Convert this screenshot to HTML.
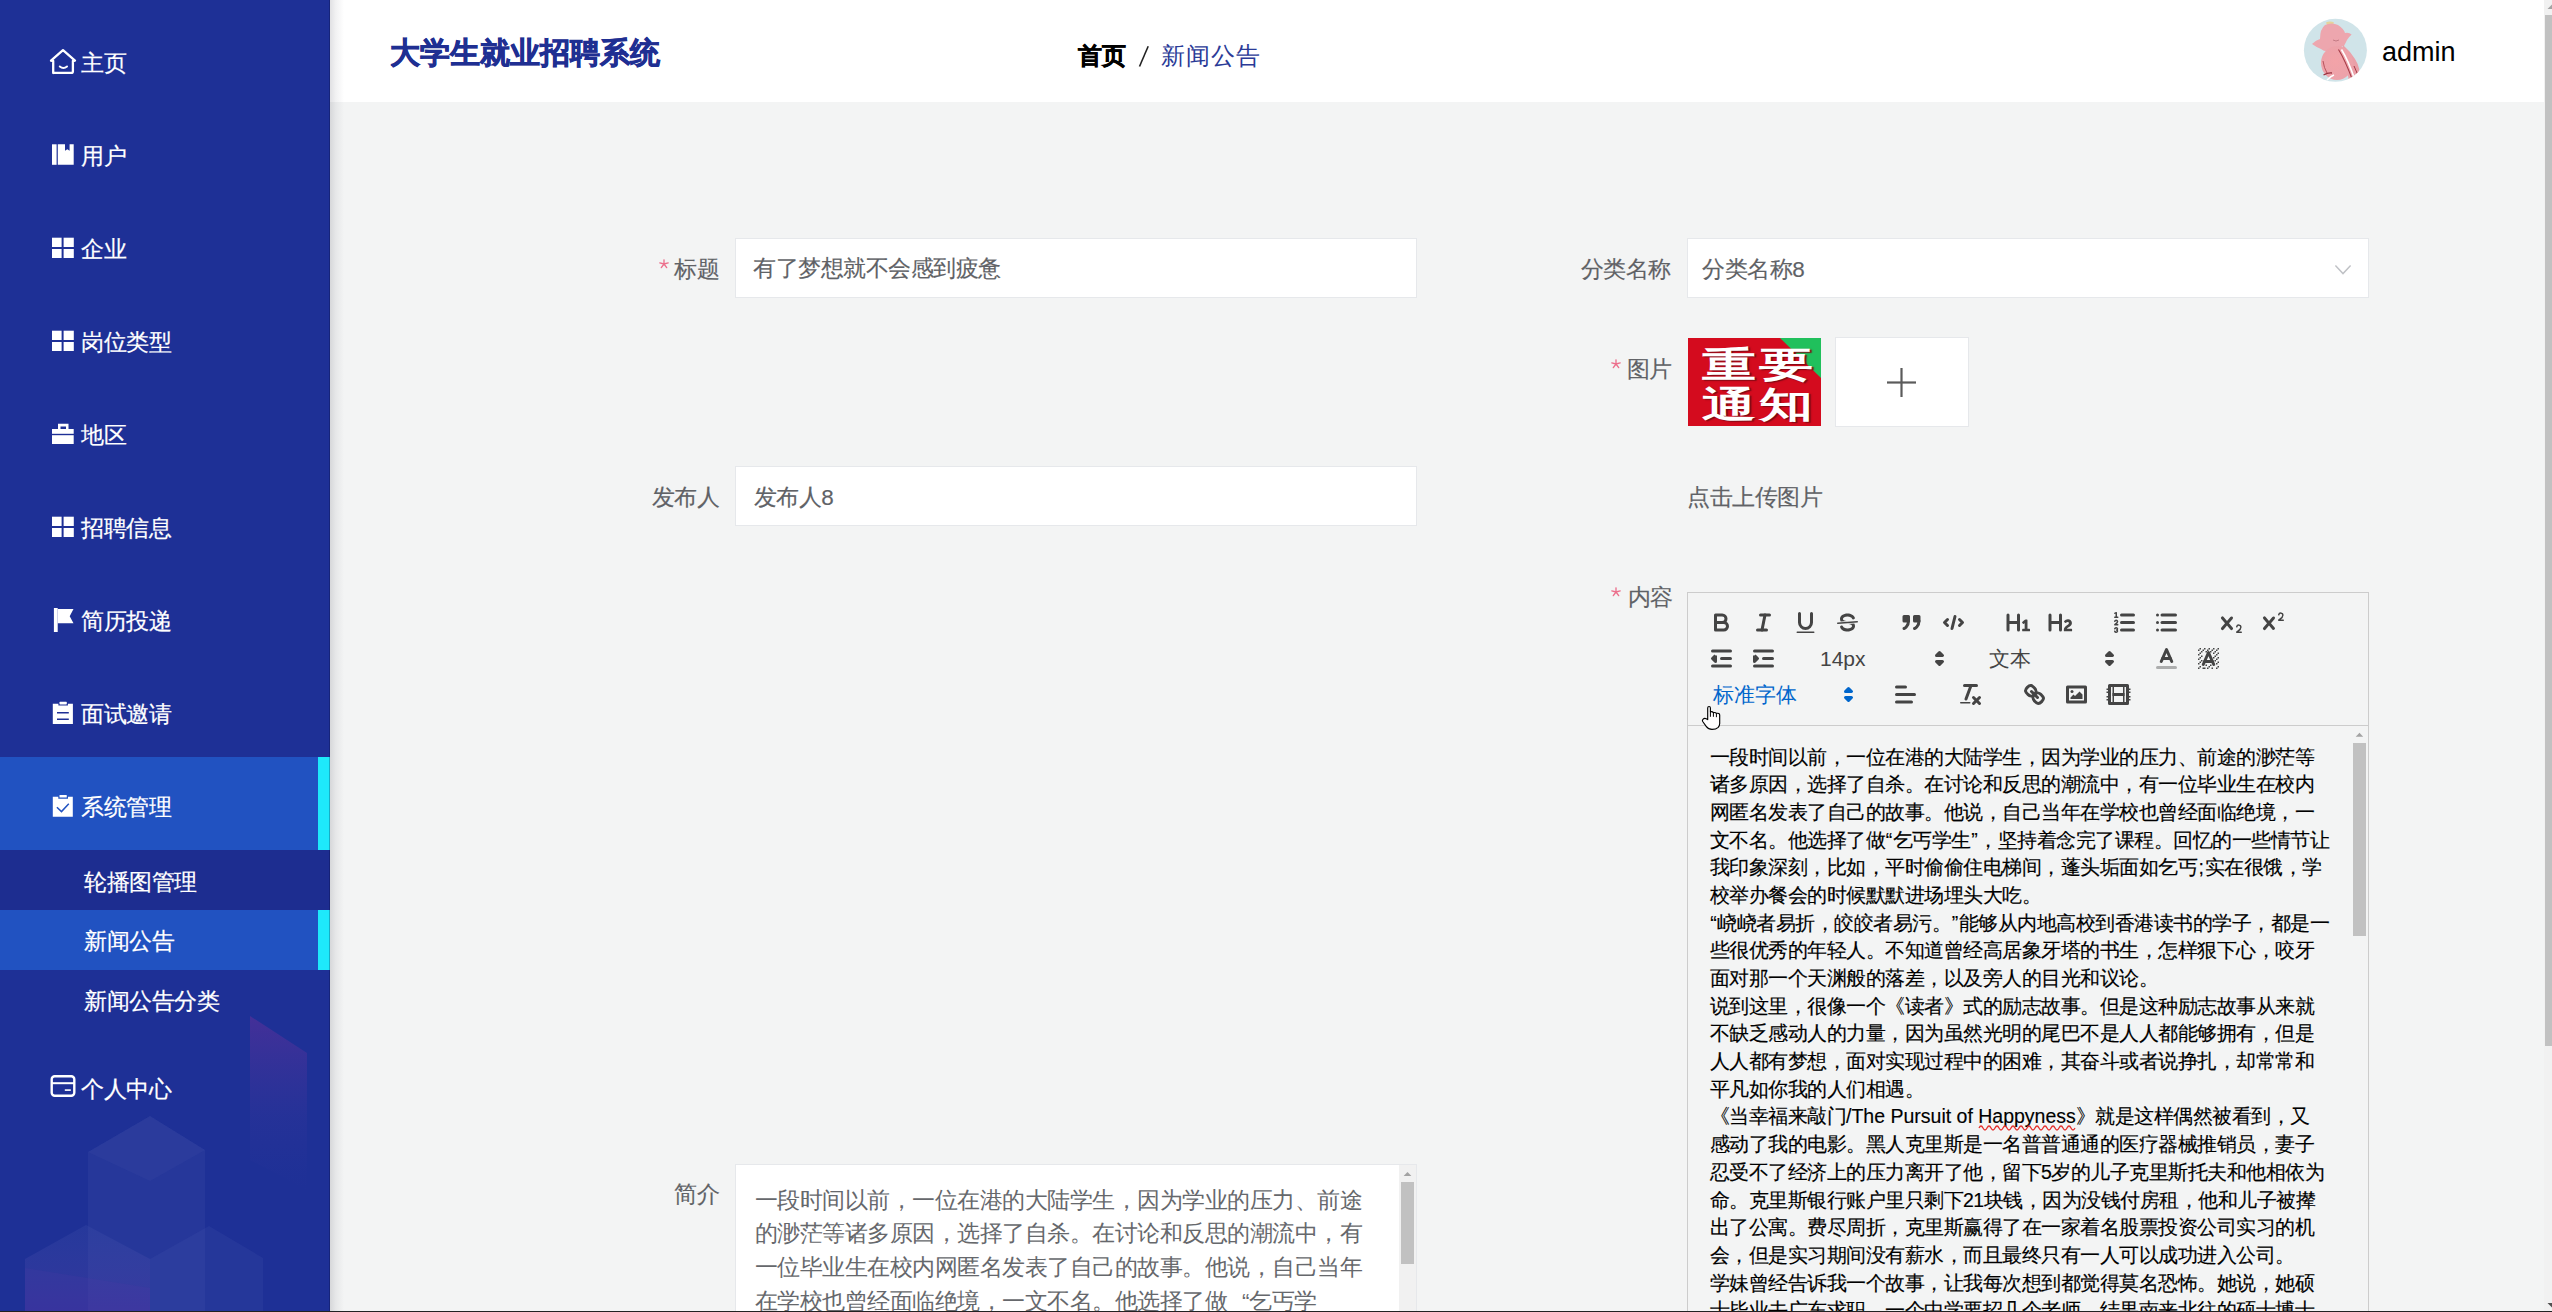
<!DOCTYPE html>
<html><head><meta charset="utf-8">
<style>
*{box-sizing:border-box}
html,body{margin:0;padding:0}
body{width:2552px;height:1312px;overflow:hidden;position:relative;background:#f3f4f4;font-family:"Liberation Sans",sans-serif;}
.a{position:absolute}
#side{left:0;top:0;width:330px;height:1312px;background:#1e3096;overflow:hidden}
.st{color:#fff;font-size:22.5px;letter-spacing:-0.5px;line-height:30px;white-space:nowrap;-webkit-text-stroke:0.2px #fff}
#hdr{left:330px;top:0;width:2214px;height:102px;background:#fff}
.tx{line-height:30px;white-space:nowrap;-webkit-text-stroke:0.15px currentColor}
.box{background:#fff;border:1px solid #e6e8eb}
.thumbt{font-size:36px;line-height:40px;font-weight:700;color:#fff;white-space:nowrap;transform:scaleX(1.5);letter-spacing:2px;transform-origin:0 0;text-shadow:1px 1px 1px #7a0a14}
.lat{letter-spacing:0px}
.q{padding:0 0.75px}
</style></head><body>
<div id="side" class="a">
 <svg class="a" style="left:0;top:0" width="330" height="1312" viewBox="0 0 330 1312">
  <defs>
   <linearGradient id="gp" x1="0" y1="0" x2="0" y2="1"><stop offset="0" stop-color="#6a2f9a" stop-opacity="0.5"/><stop offset="0.6" stop-color="#4a3aa0" stop-opacity="0.15"/><stop offset="1" stop-color="#3a3aa0" stop-opacity="0"/></linearGradient>
   <linearGradient id="gc" x1="0" y1="0" x2="0" y2="1"><stop offset="0" stop-color="#5566b8" stop-opacity="0.15"/><stop offset="1" stop-color="#5a3aa8" stop-opacity="0.35"/></linearGradient>
  </defs>
  <rect x="0" y="757" width="330" height="93" fill="#2152c1"/>
  <rect x="318" y="757" width="12" height="93" fill="#1ee9fb"/>
  <rect x="0" y="850" width="330" height="60" fill="#1d2d90"/>
  <rect x="0" y="910" width="330" height="60" fill="#2152c1"/>
  <rect x="318" y="910" width="12" height="60" fill="#1ee9fb"/>
  <!-- decoration -->
  <polygon points="250,1016 307,1053 307,1190 250,1160" fill="url(#gp)"/>
  <polygon points="150,1116 205,1150 205,1312 88,1312 88,1152" fill="#5566b8" opacity="0.15"/>
  <polygon points="150,1116 205,1150 150,1181 88,1152" fill="#6070c0" opacity="0.08"/>
  <polygon points="86,1225 150,1259 150,1312 25,1312 25,1259" fill="url(#gc)"/>
  <polygon points="209,1226 263,1258 263,1312 150,1312 150,1259" fill="#5566b8" opacity="0.14"/>
  <polygon points="25,1268 150,1288 150,1312 25,1312" fill="#5a3aa8" opacity="0.16"/>
  <!-- home -->
  <path d="M53.2,73 V61 L51,60.6 L63,50.2 L75,60.6 L72.9,61 V71.2 Q72.9,72.9 71.2,72.9 H54.9 Q53.2,72.9 53.2,71.2 Z" fill="none" stroke="#fff" stroke-width="2.3" stroke-linejoin="round"/>
  <path d="M59.8,66.5 Q63.4,69.6 67,66.5" fill="none" stroke="#fff" stroke-width="2" stroke-linecap="round"/>
  <!-- book -->
  <rect x="52" y="144.3" width="4.6" height="20.5" fill="#fff"/>
  <path d="M57.8,144.3 H65 V150.8 L67.3,149.3 L69.6,150.8 V144.3 H73.7 V164.8 H57.8 Z" fill="#fff"/>
  <!-- grids -->
  <g fill="#fff">
   <rect x="52" y="237.7" width="9.6" height="9.3"/><rect x="63.6" y="237.7" width="10.2" height="9.3"/>
   <rect x="52" y="249" width="9.6" height="9"/><rect x="63.6" y="249" width="10.2" height="9"/>
   <rect x="52" y="330.7" width="9.6" height="9.3"/><rect x="63.6" y="330.7" width="10.2" height="9.3"/>
   <rect x="52" y="342" width="9.6" height="9"/><rect x="63.6" y="342" width="10.2" height="9"/>
   <rect x="52" y="516.7" width="9.6" height="9.3"/><rect x="63.6" y="516.7" width="10.2" height="9.3"/>
   <rect x="52" y="528" width="9.6" height="9"/><rect x="63.6" y="528" width="10.2" height="9"/>
  </g>
  <!-- briefcase -->
  <path d="M58,429 V423.8 H68.5 V429 H66 V426.4 H60.5 V429 Z" fill="#fff"/>
  <rect x="52" y="429" width="21.7" height="4.8" fill="#fff"/>
  <rect x="52" y="435.2" width="21.7" height="8.8" fill="#fff"/>
  <!-- flag -->
  <rect x="53.9" y="608" width="3.8" height="24" fill="#fff"/>
  <path d="M57.7,609 H73.5 L69.7,616.2 L73.5,623.3 H57.7 Z" fill="#fff"/>
  <!-- clipboard -->
  <path d="M52.8,703.7 H58.4 V705.6 H67.9 V703.7 H72.9 V724 H52.8 Z" fill="#fff"/>
  <rect x="59.5" y="701.8" width="7.3" height="2.6" rx="0.6" fill="#fff"/>
  <rect x="57" y="712" width="11.8" height="1.5" fill="#1e3096"/>
  <rect x="57" y="718.5" width="11.8" height="1.5" fill="#1e3096"/>
  <!-- clipboard check -->
  <path d="M52.8,796.8 H58.3 V798.8 H68 V796.8 H72.8 V816.8 H52.8 Z" fill="#fff"/>
  <rect x="59.5" y="795" width="7.3" height="2.6" rx="0.6" fill="#fff"/>
  <polyline points="56.9,807.3 61.5,811.6 68.8,803.8" fill="none" stroke="#2152c1" stroke-width="1.5"/>
  <!-- card -->
  <rect x="51.7" y="1076.2" width="22.6" height="19.6" rx="3" fill="none" stroke="#fff" stroke-width="2.4"/>
  <rect x="51.7" y="1082.2" width="22.6" height="2" fill="#fff"/>
  <rect x="64.8" y="1089.3" width="6" height="1.6" fill="#fff"/>
 </svg>
 <div class="a st" style="left:81px;top:48.5px">主页</div>
 <div class="a st" style="left:81px;top:141.5px">用户</div>
 <div class="a st" style="left:81px;top:234.5px">企业</div>
 <div class="a st" style="left:81px;top:327.5px">岗位类型</div>
 <div class="a st" style="left:81px;top:420.5px">地区</div>
 <div class="a st" style="left:81px;top:513.5px">招聘信息</div>
 <div class="a st" style="left:81px;top:606.5px">简历投递</div>
 <div class="a st" style="left:81px;top:699.5px">面试邀请</div>
 <div class="a st" style="left:81px;top:792.5px">系统管理</div>
 <div class="a st" style="left:84px;top:867.5px">轮播图管理</div>
 <div class="a st" style="left:84px;top:927px">新闻公告</div>
 <div class="a st" style="left:84px;top:986.5px">新闻公告分类</div>
 <div class="a st" style="left:81px;top:1074.5px">个人中心</div>
</div>

<div id="hdr" class="a">
 <div class="a" style="left:59.7px;top:38px;font-size:30px;line-height:30px;font-weight:700;color:#1f2f92;white-space:nowrap;-webkit-text-stroke:0.7px #1f2f92">大学生就业招聘系统</div>
 <div class="a" style="left:747.5px;top:40.5px;font-size:24px;line-height:30px;white-space:nowrap;color:#000"><span style="font-weight:700;-webkit-text-stroke:0.5px #000">首页</span></div>
 <svg class="a" style="left:800px;top:40px" width="30" height="40"><line x1="9.5" y1="26.5" x2="18.2" y2="6.3" stroke="#222" stroke-width="1.6"/></svg>
 <div class="a" style="left:831px;top:40.5px;font-size:24px;letter-spacing:1px;line-height:30px;white-space:nowrap;color:#2b3b97">新闻公告</div>
 <svg class="a" style="left:1973px;top:18px" width="65" height="65" viewBox="0 0 65 65">
  <defs><clipPath id="av"><circle cx="32.4" cy="32.3" r="31.5"/></clipPath>
  <radialGradient id="avb" cx="0.45" cy="0.45" r="0.6"><stop offset="0" stop-color="#f3a3a8"/><stop offset="1" stop-color="#eba2aa"/></radialGradient></defs>
  <circle cx="32.4" cy="32.3" r="31.5" fill="#d0e4e9"/>
  <g clip-path="url(#av)">
   <path d="M23,4.5 Q27,2.5 31,4.5 L30,7 L24,7 Z" fill="#e6d39a"/>
   <path d="M9,26 Q13,22 17,21 Q17,11 22,7 Q29,4 35,7 Q41,11 42,15 Q46,14 48.6,16.6 Q46,19 44,22 Q42,26 41,28 Q34,30 28,33 Q21,34 18,31 Q13,29 9,26 Z" fill="#eda6ae"/>
   <path d="M30,22 Q33,24 36,22" fill="none" stroke="#b9707a" stroke-width="0.8"/>
   <path d="M40,27 Q47,33 52,41 Q58,50 57,64 L46,64 Q44,48 40,38 Z" fill="#eaa0a8"/>
   <ellipse cx="34" cy="45" rx="16" ry="17" fill="url(#avb)"/>
   <path d="M35.5,31.5 Q42,42 49.5,62" fill="none" stroke="#a53a45" stroke-width="1.1"/>
   <path d="M38.5,31.5 Q45,42 52,62" fill="none" stroke="#fff" stroke-width="1.6"/>
   <path d="M51,48 Q54,54 55.5,60" fill="none" stroke="#a53a45" stroke-width="1"/>
   <path d="M20.5,57 Q25,54.5 29,55" fill="none" stroke="#9a3340" stroke-width="1.4"/>
   <path d="M24,62 Q28,58 31,57" fill="none" stroke="#fff" stroke-width="1.4"/>
   <path d="M20,43 Q21,50 24,55" fill="none" stroke="#b04a55" stroke-width="0.9"/>
  </g>
 </svg>
 <div class="a" style="left:2052px;top:36px;font-size:27px;line-height:32px;white-space:nowrap;color:#000">admin</div>
</div>

<svg class="a" style="left:657.9px;top:257.8px" width="12" height="12" viewBox="-6 -6 12 12"><g stroke="#ec6f8c" stroke-width="1.35" stroke-linecap="round"><line x1="0" y1="0" x2="0" y2="-4.2"/><line x1="0" y1="0" x2="-4.2" y2="-1.1"/><line x1="0" y1="0" x2="4.2" y2="-1.1"/><line x1="0" y1="0" x2="-2.7" y2="3.6"/><line x1="0" y1="0" x2="2.7" y2="3.6"/></g></svg>
<div class="a tx" style="left:674.3px;top:254.9px;font-size:22.5px;letter-spacing:-0.5px;color:#606266;">标题</div>
<div class="a box" style="left:735px;top:238px;width:682px;height:60px"></div>
<div class="a tx" style="left:753.3px;top:254.1px;font-size:22.5px;letter-spacing:-0.5px;color:#606266;">有了梦想就不会感到疲惫</div>
<div class="a tx" style="left:1580.7px;top:254.7px;font-size:22.5px;letter-spacing:-0.5px;color:#606266;">分类名称</div>
<div class="a box" style="left:1687px;top:238px;width:682px;height:60px"></div>
<div class="a tx" style="left:1702.3px;top:254.7px;font-size:22.5px;letter-spacing:-0.5px;color:#606266;">分类名称8</div>
<svg class="a" style="left:2330px;top:260px" width="26" height="20"><polyline points="5.4,5.5 13,13.6 20.6,5.5" fill="none" stroke="#c0c2c6" stroke-width="1.45"/></svg>
<svg class="a" style="left:1610px;top:358px" width="12" height="12" viewBox="-6 -6 12 12"><g stroke="#ec6f8c" stroke-width="1.35" stroke-linecap="round"><line x1="0" y1="0" x2="0" y2="-4.2"/><line x1="0" y1="0" x2="-4.2" y2="-1.1"/><line x1="0" y1="0" x2="4.2" y2="-1.1"/><line x1="0" y1="0" x2="-2.7" y2="3.6"/><line x1="0" y1="0" x2="2.7" y2="3.6"/></g></svg>
<div class="a tx" style="left:1626.6px;top:354.5px;font-size:22.5px;letter-spacing:-0.5px;color:#606266;">图片</div>
<div class="a" style="left:1688px;top:338px;width:133px;height:88px;background:#d40b1e;overflow:hidden">
 <svg class="a" style="left:0;top:0" width="133" height="88"><polygon points="92,0 133,0 133,40" fill="#20c05c"/></svg>
 <div class="a thumbt" style="left:13.5px;top:6.5px">重要</div>
 <div class="a thumbt" style="left:13.5px;top:46.5px">通知</div>
</div>
<div class="a box" style="left:1835px;top:337px;width:134px;height:90px"></div>
<svg class="a" style="left:1880px;top:361px" width="44" height="44"><g stroke="#5b5b5b" stroke-width="2.2"><line x1="7" y1="21.5" x2="36" y2="21.5"/><line x1="21.5" y1="7" x2="21.5" y2="36"/></g></svg>
<div class="a tx" style="left:1687.0px;top:483.2px;font-size:22.5px;letter-spacing:-0.5px;color:#606266;">点击上传图片</div>
<div class="a tx" style="left:651.9px;top:483.0px;font-size:22.5px;letter-spacing:-0.5px;color:#606266;">发布人</div>
<div class="a box" style="left:735px;top:466px;width:682px;height:60px"></div>
<div class="a tx" style="left:753.7px;top:483.0px;font-size:22.5px;letter-spacing:-0.5px;color:#606266;">发布人8</div>
<svg class="a" style="left:1610px;top:586px" width="12" height="12" viewBox="-6 -6 12 12"><g stroke="#ec6f8c" stroke-width="1.35" stroke-linecap="round"><line x1="0" y1="0" x2="0" y2="-4.2"/><line x1="0" y1="0" x2="-4.2" y2="-1.1"/><line x1="0" y1="0" x2="4.2" y2="-1.1"/><line x1="0" y1="0" x2="-2.7" y2="3.6"/><line x1="0" y1="0" x2="2.7" y2="3.6"/></g></svg>
<div class="a tx" style="left:1627.7px;top:582.8px;font-size:22.5px;letter-spacing:-0.5px;color:#606266;">内容</div>
<div class="a tx" style="left:674.0px;top:1179.5px;font-size:22.5px;letter-spacing:-0.5px;color:#606266;">简介</div>
<div class="a" style="left:1687px;top:592px;width:682px;height:134px;border:1px solid #ccc"></div>
<div class="a" style="left:1687px;top:725px;width:682px;height:600px;border:1px solid #ccc;overflow:hidden" id="qc"></div>
<svg class="a" style="left:1707.5px;top:608.5px" width="27" height="27" viewBox="0 0 18 18"><path stroke="#444" stroke-width="2" stroke-linecap="round" stroke-linejoin="round" fill="none" d="M5,4H9.5A2.5,2.5,0,0,1,12,6.5v0A2.5,2.5,0,0,1,9.5,9H5A0,0,0,0,1,5,9V4A0,0,0,0,1,5,4Z"/><path stroke="#444" stroke-width="2" stroke-linecap="round" stroke-linejoin="round" fill="none" d="M5,9h5.5A2.5,2.5,0,0,1,13,11.5v0A2.5,2.5,0,0,1,10.5,14H5a0,0,0,0,1,0,0V9A0,0,0,0,1,5,9Z"/></svg>
<svg class="a" style="left:1749.5px;top:608.5px" width="27" height="27" viewBox="0 0 18 18"><line stroke="#444" stroke-width="2" stroke-linecap="round" stroke-linejoin="round" fill="none" x1="7" x2="13" y1="4" y2="4"/><line stroke="#444" stroke-width="2" stroke-linecap="round" stroke-linejoin="round" fill="none" x1="5" x2="11" y1="14" y2="14"/><line stroke="#444" stroke-width="2" stroke-linecap="round" stroke-linejoin="round" fill="none" x1="8" x2="10" y1="14" y2="4"/></svg>
<svg class="a" style="left:1791.5px;top:608.5px" width="27" height="27" viewBox="0 0 18 18"><path stroke="#444" stroke-width="2" stroke-linecap="round" stroke-linejoin="round" fill="none" d="M5,3V9a4.012,4.012,0,0,0,4,4H9a4.012,4.012,0,0,0,4-4V3"/><rect fill="#444" height="1" rx="0.5" ry="0.5" width="12" x="3" y="15"/></svg>
<svg class="a" style="left:1833.5px;top:608.5px" width="27" height="27" viewBox="0 0 18 18"><line stroke="#444" stroke-width="1" stroke-linecap="round" stroke-linejoin="round" fill="none" x1="15.5" x2="2.5" y1="8.5" y2="9.5"/><path fill="#444" d="M9.007,8C6.542,7.791,6,7.519,6,6.5,6,5.792,7.283,5,9,5c1.571,0,2.765.679,2.969,1.309a1,1,0,0,0,1.9-.617C13.356,4.106,11.354,3,9,3,6.2,3,4,4.538,4,6.5a3.2,3.2,0,0,0,.5,1.843Z"/><path fill="#444" d="M8.984,10C11.457,10.208,12,10.479,12,11.5c0,0.708-1.283,1.5-3,1.5-1.571,0-2.765-.679-2.969-1.309a1,1,0,1,0-1.9.617C4.644,13.894,6.646,15,9,15c2.8,0,5-1.538,5-3.5a3.2,3.2,0,0,0-.5-1.843Z"/></svg>
<svg class="a" style="left:1898.0px;top:608.5px" width="27" height="27" viewBox="0 0 18 18"><rect fill="#444" stroke="#444" stroke-width="2" stroke-linejoin="round" height="3" width="3" x="4" y="5"/><rect fill="#444" stroke="#444" stroke-width="2" stroke-linejoin="round" height="3" width="3" x="11" y="5"/><path fill="#444" fill-rule="evenodd" stroke="#444" stroke-width="2" stroke-linecap="round" d="M7,8c0,4.031-3,5-3,5"/><path fill="#444" fill-rule="evenodd" stroke="#444" stroke-width="2" stroke-linecap="round" d="M14,8c0,4.031-3,5-3,5"/></svg>
<svg class="a" style="left:1940.0px;top:608.5px" width="27" height="27" viewBox="0 0 18 18"><polyline stroke="#444" stroke-width="2" stroke-linecap="round" stroke-linejoin="round" fill="none" points="5 7 3 9 5 11"/><polyline stroke="#444" stroke-width="2" stroke-linecap="round" stroke-linejoin="round" fill="none" points="13 7 15 9 13 11"/><line stroke="#444" stroke-width="2" stroke-linecap="round" stroke-linejoin="round" fill="none" x1="10" x2="8" y1="5" y2="13"/></svg>
<svg class="a" style="left:2004.5px;top:608.5px" width="27" height="27" viewBox="0 0 18 18"><path fill="#444" d="M10,4V14a1,1,0,0,1-2,0V10H3v4a1,1,0,0,1-2,0V4A1,1,0,0,1,3,4V8H8V4a1,1,0,0,1,2,0Zm6.06787,9.209H14.98975V7.59863a.54085.54085,0,0,0-.605-.60547h-.62744a1.01119,1.01119,0,0,0-.748.29688L11.645,8.56641a.5435.5435,0,0,0-.022.8584l.28613.30762a.53861.53861,0,0,0,.84717.0332l.09912-.08789a1.2137,1.2137,0,0,0,.2417-.35254h.02246s-.01123.30859-.01123.60547V13.209H12.041a.54085.54085,0,0,0-.605.60547v.43945a.54085.54085,0,0,0,.605.60547h4.02686a.54085.54085,0,0,0,.605-.60547v-.43945A.54085.54085,0,0,0,16.06787,13.209Z"/></svg>
<svg class="a" style="left:2046.5px;top:608.5px" width="27" height="27" viewBox="0 0 18 18"><path fill="#444" d="M16.73975,13.81445v.43945a.54085.54085,0,0,1-.605.60547H11.855a.58392.58392,0,0,1-.64893-.60547V14.0127c0-2.90527,3.39941-3.42187,3.39941-4.55469a.77675.77675,0,0,0-.84717-.78125,1.17684,1.17684,0,0,0-.83594.38477c-.2749.26367-.561.374-.85791.13184l-.4292-.34082c-.30811-.24219-.38525-.51758-.1543-.81445a2.97155,2.97155,0,0,1,2.45361-1.17676,2.45393,2.45393,0,0,1,2.68408,2.40918c0,2.45312-3.1792,2.92676-3.27832,3.93848h2.79443A.54085.54085,0,0,1,16.73975,13.81445ZM9,3A.99974.99974,0,0,0,8,4V8H3V4A1,1,0,0,0,1,4V14a1,1,0,0,0,2,0V10H8v4a1,1,0,0,0,2,0V4A.99974.99974,0,0,0,9,3Z"/></svg>
<svg class="a" style="left:2111.0px;top:608.5px" width="27" height="27" viewBox="0 0 18 18"><line stroke="#444" stroke-width="2" stroke-linecap="round" stroke-linejoin="round" fill="none" x1="7" x2="15" y1="4" y2="4"/><line stroke="#444" stroke-width="2" stroke-linecap="round" stroke-linejoin="round" fill="none" x1="7" x2="15" y1="9" y2="9"/><line stroke="#444" stroke-width="2" stroke-linecap="round" stroke-linejoin="round" fill="none" x1="7" x2="15" y1="14" y2="14"/><line stroke="#444" stroke-width="1" stroke-linecap="round" stroke-linejoin="round" fill="none" x1="2.5" x2="4.5" y1="5.5" y2="5.5"/><path fill="#444" d="M3.5,6A0.5,0.5,0,0,1,3,5.5V3.085l-0.276.138A0.5,0.5,0,0,1,2.053,3c-0.124-.247-0.023-0.324.224-0.447l1-.5A0.5,0.5,0,0,1,4,2.5v3A0.5,0.5,0,0,1,3.5,6Z"/><path stroke="#444" stroke-width="1" stroke-linecap="round" stroke-linejoin="round" fill="none" d="M4.5,10.5h-2c0-.234,1.85-1.076,1.85-2.234A0.959,0.959,0,0,0,2.5,8.156"/><path stroke="#444" stroke-width="1" stroke-linecap="round" stroke-linejoin="round" fill="none" d="M2.5,14.846a0.959,0.959,0,0,0,1.85-.109A0.7,0.7,0,0,0,3.75,14a0.688,0.688,0,0,0,.6-0.736,0.959,0.959,0,0,0-1.85-.109"/></svg>
<svg class="a" style="left:2153.0px;top:608.5px" width="27" height="27" viewBox="0 0 18 18"><line stroke="#444" stroke-width="2" stroke-linecap="round" stroke-linejoin="round" fill="none" x1="6" x2="15" y1="4" y2="4"/><line stroke="#444" stroke-width="2" stroke-linecap="round" stroke-linejoin="round" fill="none" x1="6" x2="15" y1="9" y2="9"/><line stroke="#444" stroke-width="2" stroke-linecap="round" stroke-linejoin="round" fill="none" x1="6" x2="15" y1="14" y2="14"/><line stroke="#444" stroke-width="2" stroke-linecap="round" stroke-linejoin="round" fill="none" x1="3" x2="3" y1="4" y2="4"/><line stroke="#444" stroke-width="2" stroke-linecap="round" stroke-linejoin="round" fill="none" x1="3" x2="3" y1="9" y2="9"/><line stroke="#444" stroke-width="2" stroke-linecap="round" stroke-linejoin="round" fill="none" x1="3" x2="3" y1="14" y2="14"/></svg>
<svg class="a" style="left:2217.5px;top:608.5px" width="27" height="27" viewBox="0 0 18 18"><path fill="#444" d="M15.5,15H13.861a3.858,3.858,0,0,0,1.914-2.975,1.8,1.8,0,0,0-1.6-1.751A1.921,1.921,0,0,0,12.021,11.7a0.50013,0.50013,0,1,0,.957.291h0a0.914,0.914,0,0,1,1.053-.725,0.81,0.81,0,0,1,.744.762c0,1.076-1.16971,1.86982-1.93971,2.43082A1.45639,1.45639,0,0,0,12,15.5a0.5,0.5,0,0,0,.5.5h3A0.5,0.5,0,0,0,15.5,15Z"/><path fill="#444" d="M9.65,5.241a1,1,0,0,0-1.409.108L6,7.964,3.759,5.349A1,1,0,0,0,2.192,6.59178Q2.21541,6.6213,2.241,6.649L4.684,9.5,2.241,12.35A1,1,0,0,0,3.71,13.70722q0.02557-.02768.049-0.05722L6,11.036,8.241,13.65a1,1,0,1,0,1.567-1.24277Q9.78459,12.3777,9.759,12.35L7.316,9.5,9.759,6.651A1,1,0,0,0,9.65,5.241Z"/></svg>
<svg class="a" style="left:2259.5px;top:608.5px" width="27" height="27" viewBox="0 0 18 18"><path fill="#444" d="M15.5,7H13.861a4.015,4.015,0,0,0,1.914-2.975,1.8,1.8,0,0,0-1.6-1.751A1.922,1.922,0,0,0,12.021,3.7a0.5,0.5,0,1,0,.957.291,0.917,0.917,0,0,1,1.053-.725,0.81,0.81,0,0,1,.744.762c0,1.077-1.164,1.925-1.934,2.486A1.423,1.423,0,0,0,12,7.5a0.5,0.5,0,0,0,.5.5h3A0.5,0.5,0,0,0,15.5,7Z"/><path fill="#444" d="M9.651,5.241a1,1,0,0,0-1.41.108L6,7.964,3.759,5.349a1,1,0,1,0-1.519,1.3L4.683,9.5,2.241,12.35a1,1,0,1,0,1.519,1.3L6,11.036,8.241,13.65a1,1,0,0,0,1.519-1.3L7.317,9.5,9.759,6.651A1,1,0,0,0,9.651,5.241Z"/></svg>
<svg class="a" style="left:1707.5px;top:644.5px" width="27" height="27" viewBox="0 0 18 18"><line stroke="#444" stroke-width="2" stroke-linecap="round" stroke-linejoin="round" fill="none" x1="3" x2="15" y1="14" y2="14"/><line stroke="#444" stroke-width="2" stroke-linecap="round" stroke-linejoin="round" fill="none" x1="3" x2="15" y1="4" y2="4"/><line stroke="#444" stroke-width="2" stroke-linecap="round" stroke-linejoin="round" fill="none" x1="9" x2="15" y1="9" y2="9"/><polyline fill="#444" stroke="#444" stroke-width="2" stroke-linejoin="round" points="5 7 5 11 3 9 5 7"/></svg>
<svg class="a" style="left:1749.5px;top:644.5px" width="27" height="27" viewBox="0 0 18 18"><line stroke="#444" stroke-width="2" stroke-linecap="round" stroke-linejoin="round" fill="none" x1="3" x2="15" y1="14" y2="14"/><line stroke="#444" stroke-width="2" stroke-linecap="round" stroke-linejoin="round" fill="none" x1="3" x2="15" y1="4" y2="4"/><line stroke="#444" stroke-width="2" stroke-linecap="round" stroke-linejoin="round" fill="none" x1="9" x2="15" y1="9" y2="9"/><polyline fill="#444" stroke="#444" stroke-width="2" stroke-linejoin="round" points="3 7 3 11 5 9 3 7"/></svg>
<svg class="a" style="left:2153.0px;top:644.5px" width="27" height="27" viewBox="0 0 18 18"><line stroke="#444" stroke-width="2" stroke-linecap="round" opacity="0.4" x1="3" x2="15" y1="15" y2="15"/><polyline stroke="#444" stroke-width="2" stroke-linecap="round" stroke-linejoin="round" fill="none" points="5.5 11 9 3 12.5 11"/><line stroke="#444" stroke-width="2" stroke-linecap="round" stroke-linejoin="round" fill="none" x1="11.63" x2="6.38" y1="9" y2="9"/></svg>
<svg class="a" style="left:2195.0px;top:644.5px" width="27" height="27" viewBox="0 0 18 18"><g fill="#444"><rect x="4" y="4" width="1" height="1"/><rect x="2" y="6" width="1" height="1"/><rect x="3" y="5" width="1" height="1"/><rect x="4" y="7" width="1" height="1"/><rect x="2" y="12" width="1" height="1"/><rect x="2" y="9" width="1" height="1"/><rect x="2" y="15" width="1" height="1"/><rect x="3" y="8" width="1" height="1"/><rect x="12" y="2" width="1" height="1"/><rect x="11" y="3" width="1" height="1"/><rect x="2" y="3" width="1" height="1"/><rect x="6" y="2" width="1" height="1"/><rect x="3" y="2" width="1" height="1"/><rect x="5" y="3" width="1" height="1"/><rect x="9" y="2" width="1" height="1"/><rect x="15" y="14" width="1" height="1"/><rect x="13" y="7" width="1" height="1"/><rect x="15" y="5" width="1" height="1"/><rect x="14" y="6" width="1" height="1"/><rect x="15" y="8" width="1" height="1"/><rect x="14" y="9" width="1" height="1"/><rect x="14" y="3" width="1" height="1"/><rect x="15" y="2" width="1" height="1"/><rect x="12" y="5" width="1" height="1"/><rect x="13" y="4" width="1" height="1"/><rect x="9" y="14" width="1" height="1"/><rect x="8" y="15" width="1" height="1"/><rect x="5" y="15" width="1" height="1"/><rect x="11" y="15" width="1" height="1"/><rect x="14" y="15" width="1" height="1"/><rect x="15" y="11" width="1" height="1"/><rect x="3" y="11" width="1" height="1"/><rect x="4" y="10" width="1" height="1"/><rect x="13" y="10" width="1" height="1"/><rect x="12" y="8" width="1" height="1"/><rect x="7" y="4" width="1" height="1"/><rect x="10" y="4" width="1" height="1"/><rect x="8" y="3" width="1" height="1"/><rect x="3" y="14" width="1" height="1"/><rect x="6" y="15" width="1" height="1"/><rect x="7" y="13" width="1" height="1"/><rect x="10" y="13" width="1" height="1"/><rect x="14" y="12" width="1" height="1"/></g><polyline stroke="#444" stroke-width="2" stroke-linecap="round" stroke-linejoin="round" fill="none" points="5.5 13 9 5 12.5 13"/><line stroke="#444" stroke-width="2" stroke-linecap="round" stroke-linejoin="round" fill="none" x1="11.63" x2="6.38" y1="11" y2="11"/></svg>
<svg class="a" style="left:1926px;top:645.0px" width="27" height="27" viewBox="0 0 18 18"><polygon stroke="#444" stroke-width="2" stroke-linecap="round" stroke-linejoin="round" fill="none" points="7 11 9 13 11 11 7 11"/><polygon stroke="#444" stroke-width="2" stroke-linecap="round" stroke-linejoin="round" fill="none" points="7 7 9 5 11 7 7 7"/></svg>
<svg class="a" style="left:2095.5px;top:645.0px" width="27" height="27" viewBox="0 0 18 18"><polygon stroke="#444" stroke-width="2" stroke-linecap="round" stroke-linejoin="round" fill="none" points="7 11 9 13 11 11 7 11"/><polygon stroke="#444" stroke-width="2" stroke-linecap="round" stroke-linejoin="round" fill="none" points="7 7 9 5 11 7 7 7"/></svg>
<svg class="a" style="left:1834.5px;top:681px" width="27" height="27" viewBox="0 0 18 18"><polygon stroke="#06c" stroke-width="2" stroke-linecap="round" stroke-linejoin="round" fill="none" points="7 11 9 13 11 11 7 11"/><polygon stroke="#06c" stroke-width="2" stroke-linecap="round" stroke-linejoin="round" fill="none" points="7 7 9 5 11 7 7 7"/></svg>
<svg class="a" style="left:1892px;top:681px" width="27" height="27" viewBox="0 0 18 18"><line stroke="#444" stroke-width="2" stroke-linecap="round" stroke-linejoin="round" fill="none" x1="3" x2="15" y1="9" y2="9"/><line stroke="#444" stroke-width="2" stroke-linecap="round" stroke-linejoin="round" fill="none" x1="3" x2="13" y1="14" y2="14"/><line stroke="#444" stroke-width="2" stroke-linecap="round" stroke-linejoin="round" fill="none" x1="3" x2="9" y1="4" y2="4"/></svg>
<svg class="a" style="left:1956.5px;top:681px" width="27" height="27" viewBox="0 0 18 18"><line stroke="#444" stroke-width="2" stroke-linecap="round" stroke-linejoin="round" fill="none" x1="5" x2="13" y1="3" y2="3"/><line stroke="#444" stroke-width="2" stroke-linecap="round" stroke-linejoin="round" fill="none" x1="6" x2="9.35" y1="12" y2="3"/><line stroke="#444" stroke-width="2" stroke-linecap="round" stroke-linejoin="round" fill="none" x1="11" x2="15" y1="11" y2="15"/><line stroke="#444" stroke-width="2" stroke-linecap="round" stroke-linejoin="round" fill="none" x1="15" x2="11" y1="11" y2="15"/><rect fill="#444" height="1" rx="0.5" ry="0.5" width="7" x="2" y="14"/></svg>
<svg class="a" style="left:2021.0px;top:681px" width="27" height="27" viewBox="0 0 18 18"><line stroke="#444" stroke-width="2" stroke-linecap="round" stroke-linejoin="round" fill="none" x1="7" x2="11" y1="7" y2="11"/><path stroke="#444" stroke-width="2" stroke-linecap="round" stroke-linejoin="round" fill="none" d="M8.9,4.577a3.476,3.476,0,0,1,.36,4.679A3.476,3.476,0,0,1,4.577,8.9C3.185,7.5,2.035,6.4,4.217,4.217S7.5,3.185,8.9,4.577Z"/><path stroke="#444" stroke-width="2" stroke-linecap="round" stroke-linejoin="round" fill="none" d="M13.423,9.1a3.476,3.476,0,0,0-4.679-.36,3.476,3.476,0,0,0,.36,4.679c1.392,1.392,2.5,2.542,4.679.36S14.815,10.5,13.423,9.1Z"/></svg>
<svg class="a" style="left:2063.0px;top:681px" width="27" height="27" viewBox="0 0 18 18"><rect stroke="#444" stroke-width="2" stroke-linecap="round" stroke-linejoin="round" fill="none" height="10" width="12" x="3" y="4"/><circle fill="#444" cx="6" cy="7" r="1"/><polyline fill="#444" fill-rule="evenodd" points="5 12 5 11 7 9 8 10 11 7 13 9 13 12 5 12"/></svg>
<svg class="a" style="left:2105.0px;top:681px" width="27" height="27" viewBox="0 0 18 18"><rect stroke="#444" stroke-width="2" stroke-linecap="round" stroke-linejoin="round" fill="none" height="12" width="12" x="3" y="3"/><rect fill="#444" height="12" width="1" x="5" y="3"/><rect fill="#444" height="12" width="1" x="12" y="3"/><rect fill="#444" height="2" width="8" x="5" y="8"/><rect fill="#444" height="1" width="3" x="1" y="5"/><rect fill="#444" height="1" width="3" x="1" y="7"/><rect fill="#444" height="1" width="3" x="1" y="10"/><rect fill="#444" height="1" width="3" x="1" y="12"/><rect fill="#444" height="1" width="3" x="14" y="5"/><rect fill="#444" height="1" width="3" x="14" y="7"/><rect fill="#444" height="1" width="3" x="14" y="10"/><rect fill="#444" height="1" width="3" x="14" y="12"/></svg>
<div class="a" style="left:1820px;top:644px;font-size:21px;line-height:30px;color:#444;white-space:nowrap">14px</div>
<div class="a" style="left:1989px;top:644px;font-size:21px;letter-spacing:0px;line-height:30px;color:#444;white-space:nowrap">文本</div>
<div class="a" style="left:1713px;top:680px;font-size:21px;letter-spacing:0px;line-height:30px;color:#06c;white-space:nowrap">标准字体</div>
<div class="a" id="edc" style="left:1709.5px;top:743.5px;font-size:19.5px;letter-spacing:-0.5px;line-height:27.69px;color:#000;white-space:nowrap;-webkit-text-stroke:0.15px #000">
<div id="l0">一段时间以前，一位在港的大陆学生，因为学业的压力、前途的渺茫等</div>
<div id="l1">诸多原因，选择了自杀。在讨论和反思的潮流中，有一位毕业生在校内</div>
<div id="l2">网匿名发表了自己的故事。他说，自己当年在学校也曾经面临绝境，一</div>
<div id="l3">文不名。他选择了做<span class="q">“</span>乞丐学生<span class="q">”</span>，坚持着念完了课程。回忆的一些情节让</div>
<div id="l4">我印象深刻，比如，平时偷偷住电梯间，蓬头垢面如乞丐<span style="padding:0 1.5px">;</span>实在很饿，学</div>
<div id="l5">校举办餐会的时候默默进场埋头大吃。</div>
<div id="l6"><span class="q">“</span>峣峣者易折，皎皎者易污。<span class="q">”</span>能够从内地高校到香港读书的学子，都是一</div>
<div id="l7">些很优秀的年轻人。不知道曾经高居象牙塔的书生，怎样狠下心，咬牙</div>
<div id="l8">面对那一个天渊般的落差，以及旁人的目光和议论。</div>
<div id="l9">说到这里，很像一个《读者》式的励志故事。但是这种励志故事从来就</div>
<div id="l10">不缺乏感动人的力量，因为虽然光明的尾巴不是人人都能够拥有，但是</div>
<div id="l11">人人都有梦想，面对实现过程中的困难，其奋斗或者说挣扎，却常常和</div>
<div id="l12">平凡如你我的人们相遇。</div>
<div id="l13">《当幸福来敲门<span class="lat">/The Pursuit of Happyness</span>》就是这样偶然被看到，又</div>
<div id="l14">感动了我的电影。黑人克里斯是一名普普通通的医疗器械推销员，妻子</div>
<div id="l15">忍受不了经济上的压力离开了他，留下5岁的儿子克里斯托夫和他相依为</div>
<div id="l16">命。克里斯银行账户里只剩下21块钱，因为没钱付房租，他和儿子被撵</div>
<div id="l17">出了公寓。费尽周折，克里斯赢得了在一家着名股票投资公司实习的机</div>
<div id="l18">会，但是实习期间没有薪水，而且最终只有一人可以成功进入公司。</div>
<div id="l19">学妹曾经告诉我一个故事，让我每次想到都觉得莫名恐怖。她说，她硕</div>
<div id="l20">士毕业去广东求职，一个中学要招几个老师，结果南来北往的硕士博士</div>
</div>
<svg class="a" style="left:1978px;top:1122px" width="100" height="10"><path d="M1,6 q2,-4 4,0 t4,0 t4,0 t4,0 t4,0 t4,0 t4,0 t4,0 t4,0 t4,0 t4,0 t4,0 t4,0 t4,0 t4,0 t4,0 t4,0 t4,0 t4,0 t4,0 t4,0 t4,0 t4,0 t4,0" fill="none" stroke="#e3322f" stroke-width="1.3"/></svg>
<div class="a" style="left:2352px;top:726px;width:16px;height:586px;background:#f3f4f4"></div>
<svg class="a" style="left:2352px;top:726px" width="16" height="16"><polygon points="3.7,10.8 7.5,6.8 11.2,10.8" fill="#a3a3a3"/></svg>
<div class="a" style="left:2353px;top:743px;width:13px;height:193px;background:#c1c1c1"></div>
<div class="a box" style="left:735px;top:1164px;width:682px;height:200px"></div>
<div class="a" style="left:754.5px;top:1183.5px;font-size:22.5px;letter-spacing:-0.5px;line-height:33.75px;color:#66686c;white-space:nowrap">
<div>一段时间以前，一位在港的大陆学生，因为学业的压力、前途</div>
<div>的渺茫等诸多原因，选择了自杀。在讨论和反思的潮流中，有</div>
<div>一位毕业生在校内网匿名发表了自己的故事。他说，自己当年</div>
<div>在学校也曾经面临绝境，一文不名。他选择了做<span style="padding-left:15px">“</span>乞丐学</div>
</div>
<div class="a" style="left:1399px;top:1165px;width:17px;height:147px;background:#f1f1f1"></div>
<svg class="a" style="left:1399px;top:1165px" width="17" height="17"><polygon points="4.6,11 8.5,7 12.4,11" fill="#a3a3a3"/></svg>
<div class="a" style="left:1401px;top:1182px;width:13px;height:82px;background:#c1c1c1"></div>
<div class="a" style="left:2544px;top:0;width:8px;height:1312px;background:#f1f1f1"></div>
<svg class="a" style="left:2544px;top:0" width="8" height="16"><polygon points="3.5,9 8,4.5 12.5,9" fill="#a3a3a3"/></svg>
<div class="a" style="left:2545px;top:15px;width:7px;height:1031px;background:#c1c1c1"></div>
<svg class="a" style="left:2544px;top:1296px" width="8" height="16"><polygon points="3.5,7 8,11.5 12.5,7" fill="#505050"/></svg>
<div class="a" style="left:330px;top:0;width:14px;height:1311px;background:linear-gradient(to right,rgba(20,20,40,0.13),rgba(20,20,40,0.06) 40%,rgba(0,0,0,0))"></div>
<div class="a" style="left:329px;top:0;width:1px;height:1311px;background:rgba(0,0,40,0.25)"></div>
<svg class="a" style="left:1690px;top:700px" width="40" height="40" viewBox="1690 700 40 40">
<path d="M1707.7,719.6 V708.1 Q1707.7,706.5 1709.05,706.5 Q1710.4,706.5 1710.4,708.1 V711.7 Q1712.6,711.4 1713.4,712.6 Q1715.6,712.3 1716.4,713.3 Q1719.6,712.9 1719.7,715 V723.5 Q1719.7,725.5 1718.2,727.3 Q1716,729.4 1712,729.4 Q1708.5,729.4 1706.2,726.3 L1702.7,721.5 Q1702,720.3 1702.9,719.3 Q1704.3,717.9 1706.2,718.7 Z" fill="#fff" stroke="#000" stroke-width="1.15" stroke-linejoin="round"/>
<g stroke="#000" stroke-width="1"><line x1="1710.4" y1="711.7" x2="1710.4" y2="716.8"/><line x1="1713.4" y1="712.6" x2="1713.4" y2="716.8"/><line x1="1716.4" y1="713.3" x2="1716.4" y2="717.2"/></g>
</svg>
<div class="a" style="left:0;top:1311px;width:2552px;height:1px;background:#222"></div>

</body></html>
